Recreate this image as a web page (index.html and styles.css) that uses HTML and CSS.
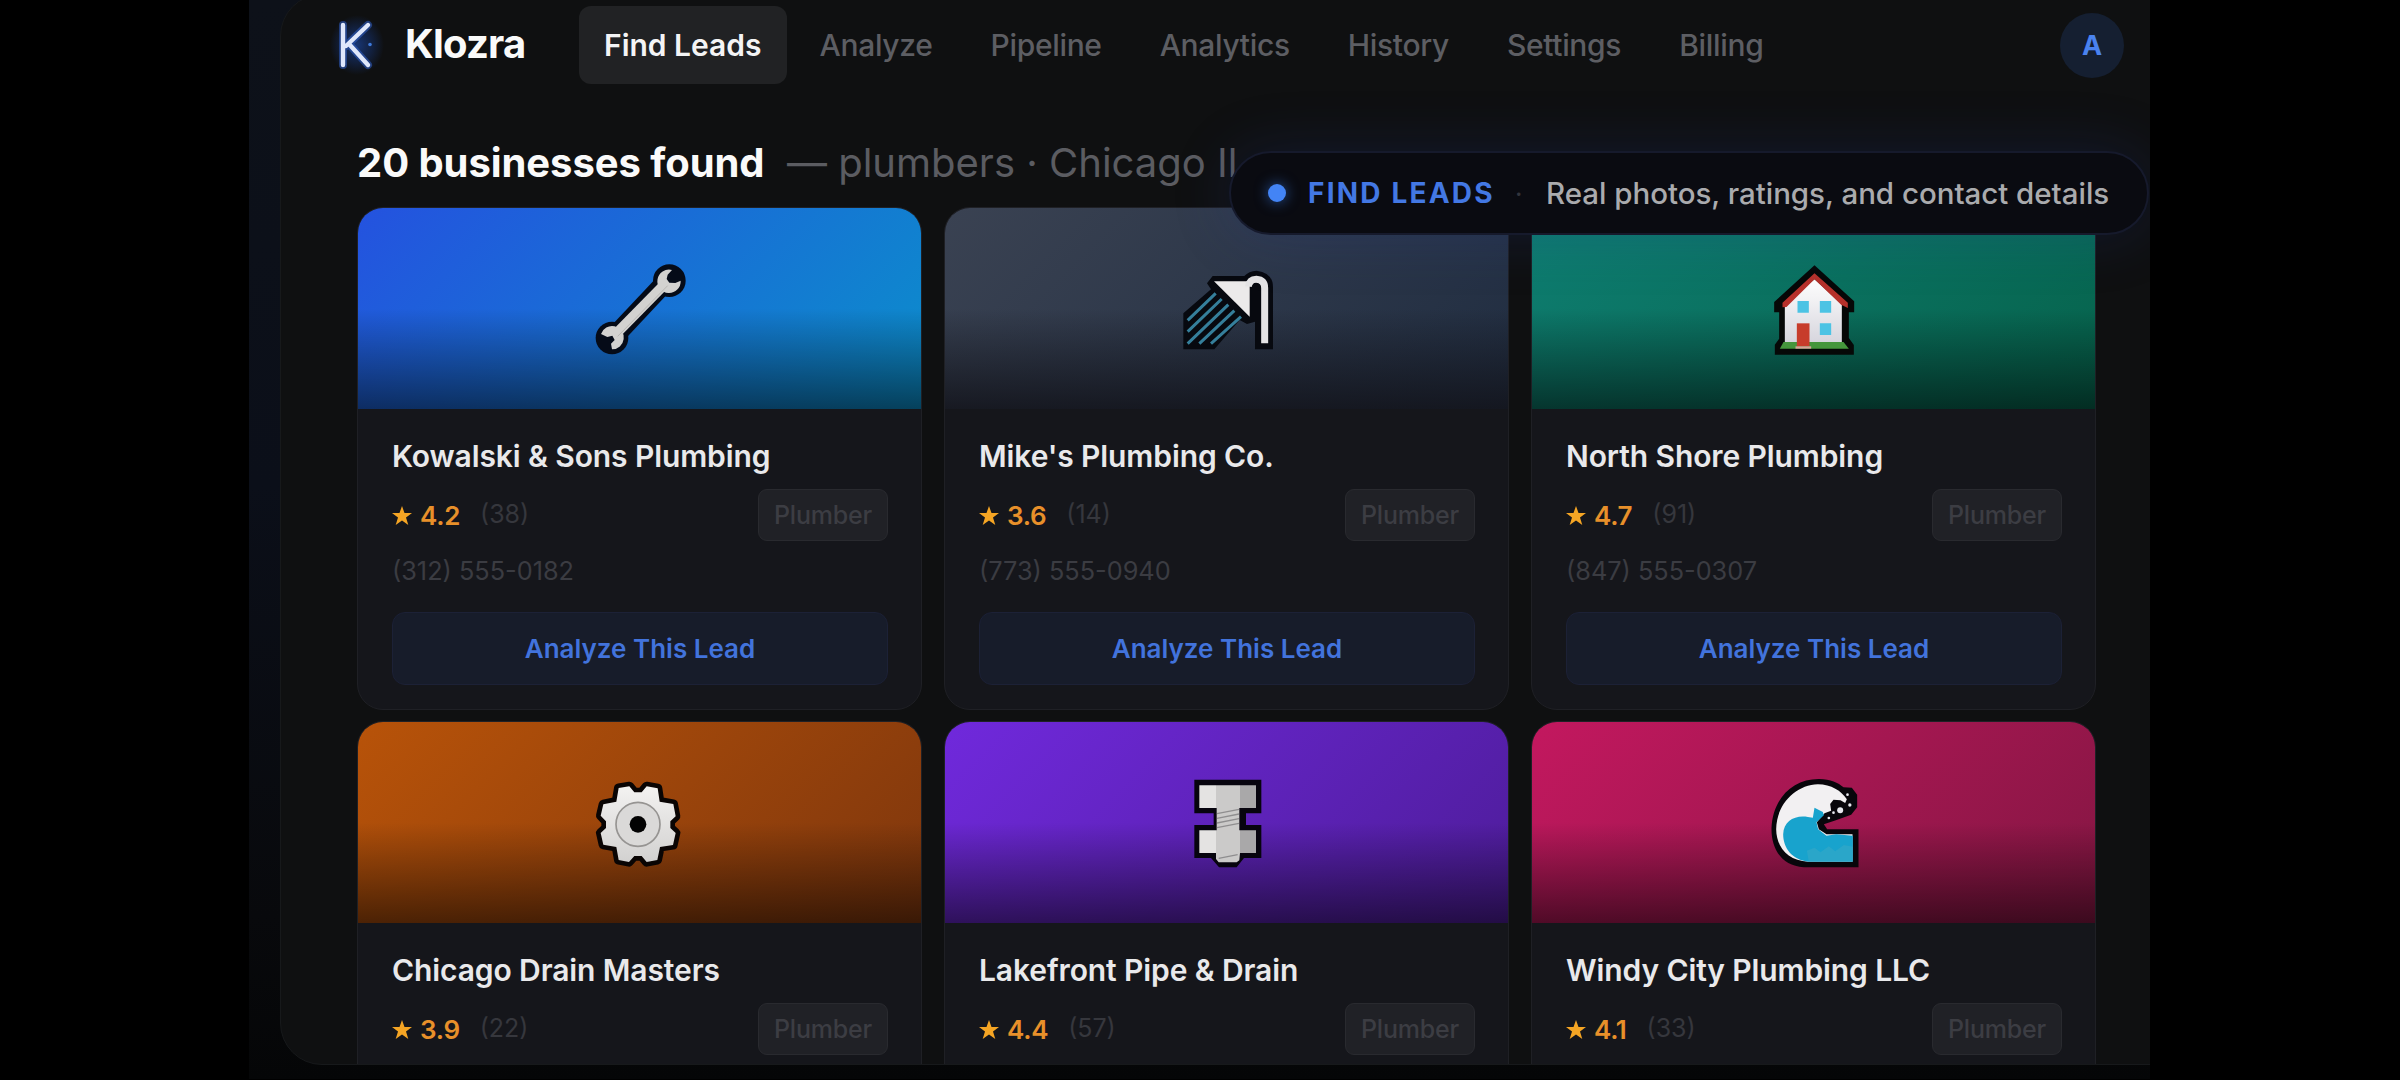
FILE: index.html
```html
<!DOCTYPE html>
<html lang="en">
<head>
<meta charset="utf-8">
<title>Klozra – Find Leads</title>
<link rel="stylesheet" href="styles.css">
</head>
<body>
<div class="stage">
  <div class="app">
    <header class="topbar">
      <svg class="logo" viewBox="0 0 54 60" fill="none">
        <defs><radialGradient id="glow"><stop offset="0" stop-color="#1d4fb8" stop-opacity=".6"/><stop offset=".55" stop-color="#173a86" stop-opacity=".4"/><stop offset="1" stop-color="#173a86" stop-opacity="0"/></radialGradient></defs>
        <ellipse cx="27" cy="30" rx="27" ry="30" fill="url(#glow)"/>
        <path d="M13 10V50M38 10L16 31M19 29L38 50" stroke="#2f5fc4" stroke-opacity=".55" stroke-width="8" stroke-linecap="round"/>
        <path d="M13 10V50M38 10L16 31M19 29L38 50" stroke="#dfe7fb" stroke-width="4.4" stroke-linecap="round"/>
        <circle cx="40" cy="29.500" r="1.800" fill="#3d78d8"/>
      </svg>
      <span class="brand">Klozra</span>
      <nav class="nav">
        <a class="nav-item active">Find Leads</a>
        <a class="nav-item">Analyze</a>
        <a class="nav-item">Pipeline</a>
        <a class="nav-item">Analytics</a>
        <a class="nav-item">History</a>
        <a class="nav-item">Settings</a>
        <a class="nav-item">Billing</a>
      </nav>
      <span class="avatar">A</span>
    </header>
    <main class="content">
      <h1 class="heading">20 businesses found <span class="query">— plumbers · Chicago Il</span></h1>
      <div class="grid">
        <article class="card">
          <div class="cover blue">
            <svg class="icon" viewBox="93 63 288 288">
              <path d="M152 298L325 114" stroke="#050b18" stroke-width="58"/>
              <circle cx="153" cy="294" r="49" fill="#050b18"/><circle cx="325" cy="122" r="49" fill="#050b18"/>
              <path d="M174 272L306 138" stroke="#d3d2d0" stroke-width="30"/>
              <path d="M120 282A35 35 0 1 1 153 328L150 311L161 300L154 287L139 291Z" fill="#d3d2d0"/>
              <path d="M333 90A35 35 0 1 0 359 122L343 129L325 128L317 117L320 104Z" fill="#d3d2d0"/>
              <path d="M170 289L320 137" stroke="#b9b7b4" stroke-width="3"/>
            </svg>
          </div>
          <div class="body">
            <h2 class="name">Kowalski &amp; Sons Plumbing</h2>
            <div class="meta"><svg class="star" viewBox="0 0 20 20"><path d="M10 0L12.500 7H20L14 11.500L16.300 19L10 14.600L3.700 19L6 11.500L0 7H7.500Z"/></svg><b class="score">4.2</b><span class="count">(38)</span><span class="tag">Plumber</span></div>
            <p class="phone">(312) 555-0182</p>
            <a class="button">Analyze This Lead</a>
          </div>
        </article>
        <article class="card">
          <div class="cover slate">
            <svg class="icon" viewBox="84 33 288 288">
              <path d="M168 100L185 78H280Q293 63 317 62Q366 68 366 112V298H312V215L288 222L266 210L190 298H97V190L180 118Z" fill="#07090f"/>
              <g stroke="#357f9b" stroke-width="9"><path d="M110 211L194 130M110 245L212 147M110 281L232 164M145 281L250 182M180 281L270 200"/></g>
              <path d="M189 94H296V200Z" fill="#eceaea"/>
              <path d="M293 110Q295 88 316 88Q341 90 341 114V280" fill="none" stroke="#e4e3e4" stroke-width="21"/>
              <path d="M301 115Q304 98 316 98Q329 100 329 117V198H301Z" fill="#07090f"/>
            </svg>
          </div>
          <div class="body">
            <h2 class="name">Mike's Plumbing Co.</h2>
            <div class="meta"><svg class="star" viewBox="0 0 20 20"><path d="M10 0L12.500 7H20L14 11.500L16.300 19L10 14.600L3.700 19L6 11.500L0 7H7.500Z"/></svg><b class="score">3.6</b><span class="count">(14)</span><span class="tag">Plumber</span></div>
            <p class="phone">(773) 555-0940</p>
            <a class="button">Analyze This Lead</a>
          </div>
        </article>
        <article class="card">
          <div class="cover green">
            <svg class="icon" viewBox="76.5 33 288 288">
              <defs><linearGradient id="wall" x2="0" y2="1"><stop offset="0" stop-color="#fff"/><stop offset="1" stop-color="#d5d4dc"/></linearGradient></defs>
              <path d="M222 46L341 154V187H325V264L340 285V314H103V284L116 266V187H101V156Z" fill="#060807"/>
              <path d="M222 88L304 162V284H133V162Z" fill="url(#wall)"/>
              <path d="M126 172V158L222 70L322 158V174L302 164L222 88L138 171Z" fill="#b7312b"/>
              <path d="M118 296L129 276H309L325 296Z" fill="#45963c"/>
              <path d="M169 220H207V289H169Z" fill="#c73c2b"/><path d="M165 289H212V296H165Z" fill="#d9a39b"/>
              <path d="M171 153H205V188H171ZM238 153H272V188H238ZM238 220H272V255H238Z" fill="#4cc3e4"/>
            </svg>
          </div>
          <div class="body">
            <h2 class="name">North Shore Plumbing</h2>
            <div class="meta"><svg class="star" viewBox="0 0 20 20"><path d="M10 0L12.500 7H20L14 11.500L16.300 19L10 14.600L3.700 19L6 11.500L0 7H7.500Z"/></svg><b class="score">4.7</b><span class="count">(91)</span><span class="tag">Plumber</span></div>
            <p class="phone">(847) 555-0307</p>
            <a class="button">Analyze This Lead</a>
          </div>
        </article>
        <article class="card">
          <div class="cover orange">
            <svg class="icon" viewBox="93 42 288 288">
              <defs><linearGradient id="gear" x2="0" y2="1"><stop offset="0" stop-color="#f3f2f1"/><stop offset="1" stop-color="#d2d1d0"/></linearGradient></defs>
              <path d="M173 81L205 76L220 94H242L257 76L290 82L296 122L337 129L344 166L328 181V201L344 216L336 252L297 258L289 297L257 303L242 285H220L204 303L173 297L166 258L127 251L119 216L135 201V181L119 164L127 130L166 122Z" fill="url(#gear)" stroke="#0a0504" stroke-width="28" stroke-linejoin="round" paint-order="stroke"/>
              <circle cx="231" cy="190" r="66" fill="#dad9d8" stroke="#969492" stroke-width="5"/>
              <circle cx="231" cy="190" r="25" fill="#030303"/>
            </svg>
          </div>
          <div class="body">
            <h2 class="name">Chicago Drain Masters</h2>
            <div class="meta"><svg class="star" viewBox="0 0 20 20"><path d="M10 0L12.500 7H20L14 11.500L16.300 19L10 14.600L3.700 19L6 11.500L0 7H7.500Z"/></svg><b class="score">3.9</b><span class="count">(22)</span><span class="tag">Plumber</span></div>
          </div>
        </article>
        <article class="card">
          <div class="cover purple">
            <svg class="icon" viewBox="84 42 288 288">
              <path d="M130 56H331V157H285V192H331V291H279L257 319H204L180 291H130V192H188V157H130Z" fill="#07040e"/>
              <path d="M145 73H195V141H145ZM145 208H195V276H145Z" fill="#e4e3e2"/>
              <path d="M195 73H267V141H265V208H267V276L265 298L257 304H203L195 294V276V208H197V141H195Z" fill="#cbcac9"/>
              <path d="M267 73H315V141H267ZM267 208H315V276H267Z" fill="#a9a8a9"/>
              <path d="M198 158L264 145M198 172L264 159M198 186L264 173M198 200L264 187M203 292L260 281" stroke="#8f8e8f" stroke-width="4"/>
            </svg>
          </div>
          <div class="body">
            <h2 class="name">Lakefront Pipe &amp; Drain</h2>
            <div class="meta"><svg class="star" viewBox="0 0 20 20"><path d="M10 0L12.500 7H20L14 11.500L16.300 19L10 14.600L3.700 19L6 11.500L0 7H7.500Z"/></svg><b class="score">4.4</b><span class="count">(57)</span><span class="tag">Plumber</span></div>
          </div>
        </article>
        <article class="card">
          <div class="cover pink">
            <svg class="icon" viewBox="76.5 42 288 288">
              <path d="M190 319C122 314 92 262 93 202C96 110 160 53 236 54C270 55 293 65 309 79L334 80L350 101V139L332 161L286 178L250 190L260 205H354V319Z" fill="#08060b"/>
              <path d="M203 302C143 300 108 260 107 205C108 128 167 72 232 70C272 70 303 90 319 115L314 126L300 118L279 116L269 129L272 149L252 157L229 184L235 205L258 220H336V302Z" fill="#f2f0f2"/>
              <path d="M205 302C154 298 128 260 128 220C130 180 162 162 202 168L217 170L222 140L247 153L250 163L228 184L233 205L258 224L287 220L337 224V302Z" fill="#18a3cd"/>
              <path d="M199 269L222 260L240 274L265 256L284 271L310 252L337 257V302H205Z" fill="#45abc4" opacity=".4"/>
              <g fill="#e7e8ee"><circle cx="299" cy="148" r="9"/><circle cx="321" cy="101" r="4"/><circle cx="328" cy="132" r="5"/><circle cx="279" cy="155" r="4"/><circle cx="265" cy="171" r="4"/></g>
            </svg>
          </div>
          <div class="body">
            <h2 class="name">Windy City Plumbing LLC</h2>
            <div class="meta"><svg class="star" viewBox="0 0 20 20"><path d="M10 0L12.500 7H20L14 11.500L16.300 19L10 14.600L3.700 19L6 11.500L0 7H7.500Z"/></svg><b class="score">4.1</b><span class="count">(33)</span><span class="tag">Plumber</span></div>
          </div>
        </article>
      </div>
    </main>
  </div>
  <div class="toast"><i class="dot"></i><span class="toast-title">FIND LEADS</span><span class="sep">·</span><span class="toast-text">Real photos, ratings, and contact details</span></div>
</div>
</body>
</html>
```
FILE: styles.css
```css
* { box-sizing: border-box; }
body {
  margin: 0;
  height: 1080px;
  overflow: hidden;
  background: #000;
  font-family: Inter, "Liberation Sans", sans-serif;
}
.stage {
  position: relative;
  width: 1901px;
  height: 1079px;
  margin-left: 249px;
  overflow: hidden;
  background: linear-gradient(#0d1119 0, #0b0f19 45%, #08090c 85%, #050607 100%);
}
.app {
  width: 1930px;
  height: 1071px;
  margin: -6px 0 0 31px;
  padding: 5px 0 0;
  border: 1px solid #17191b;
  border-radius: 42px;
  overflow: hidden;
  background: #0f1011;
}
.topbar {
  display: flex;
  align-items: center;
  width: 1843px;
  height: 90px;
  padding-left: 49px;
}
.logo { width: 54px; height: 60px; }
.brand {
  width: 174px;
  padding: 0 0 3px 21px;
  font-size: 40px;
  font-weight: 700;
  line-height: 48px;
  letter-spacing: -0.8px;
  color: #fafafa;
}
.nav { display: flex; gap: 8px; margin-left: 21px; }
.nav-item {
  padding: 0 25px;
  border-radius: 12px;
  font-size: 30px;
  font-weight: 500;
  line-height: 78px;
  letter-spacing: -0.33px;
  color: #5d5e63;
}
.nav-item.active {
  background: #212224;
  font-weight: 600;
  letter-spacing: 0;
  color: #f4f4f5;
}
.avatar {
  width: 64px;
  height: 65px;
  margin-left: auto;
  border-radius: 50%;
  background: #151f31;
  font-size: 27px;
  font-weight: 700;
  line-height: 66px;
  text-align: center;
  color: #4a82ee;
}
.content { padding: 43px 54px 0 76px; width: 1871px; }
.heading {
  height: 74px;
  margin: 0;
  font-size: 40px;
  font-weight: 700;
  line-height: 60px;
  letter-spacing: -0.07px;
  white-space: nowrap;
  color: #fafafa;
}
.query { margin-left: 13px; font-weight: 400; letter-spacing: 0; color: #5b5c61; }
.grid {
  display: grid;
  grid-template-columns: repeat(3, 565px);
  gap: 11px 22px;
}
.card {
  height: 503px;
  border: 1px solid #1f2025;
  border-radius: 26px;
  overflow: hidden;
  background: #15161b;
}
.cover {
  display: flex;
  align-items: center;
  justify-content: center;
  height: 201px;
}
.blue { background: linear-gradient(transparent 50%, rgba(0,0,0,.55)), linear-gradient(135deg, #2452df, #0b8fcb); }
.slate { background: linear-gradient(transparent 50%, rgba(18,19,26,.85)), linear-gradient(135deg, #3a4252, #202d41); }
.green { background: linear-gradient(transparent 50%, rgba(0,0,0,.55)), linear-gradient(135deg, #0e7d70, #06634c); }
.orange { background: linear-gradient(transparent 50%, rgba(0,0,0,.55)), linear-gradient(135deg, #b85309, #7e360d); }
.purple { background: linear-gradient(transparent 50%, rgba(0,0,0,.55)), linear-gradient(135deg, #7029dc, #4d1c99); }
.pink { background: linear-gradient(transparent 50%, rgba(0,0,0,.55)), linear-gradient(135deg, #c3185f, #831642); }
.icon { width: 96px; height: 96px; }
.body { padding: 28px 33px 0 34px; }
.name {
  margin: 0;
  font-size: 30px;
  font-weight: 600;
  line-height: 38px;
  letter-spacing: -0.1px;
  color: #e9e9eb;
  white-space: nowrap;
}
.meta { display: flex; align-items: center; height: 52px; margin-top: 14px; }
.star { width: 20px; height: 20px; margin-top: 1px; fill: #f5a524; }
.score {
  margin-left: 8px;
  font-size: 26px;
  font-weight: 600;
  letter-spacing: -0.3px;
  color: #e8902a;
}
.count { margin: -3px 0 0 20px; font-size: 25px; color: #36373d; }
.tag {
  width: 130px;
  height: 52px;
  margin-left: auto;
  border: 1px solid #292a2f;
  border-radius: 9px;
  background: #202126;
  font-size: 25px;
  font-weight: 500;
  line-height: 51px;
  letter-spacing: -0.2px;
  text-align: center;
  color: #3c3d43;
}
.phone {
  margin: 14px 0 0;
  font-size: 25.3px;
  line-height: 32px;
  color: #3b3c42;
}
.button {
  display: block;
  height: 73px;
  margin-top: 25px;
  border: 1px solid #1c2136;
  border-radius: 13px;
  background: #171c2a;
  font-size: 26px;
  font-weight: 600;
  line-height: 71px;
  text-align: center;
  color: #4273dc;
}
/* Floating caption over the results */
.toast {
  position: absolute;
  left: 980px;
  top: 151px;
  display: flex;
  align-items: center;
  width: 920px;
  height: 84px;
  padding-left: 37px;
  border: 2px solid #161a2c;
  border-radius: 42px;
  background: #0a0b11;
  box-shadow: 0 0 60px rgba(37,60,150,.22);
  white-space: nowrap;
}
.dot {
  width: 18px;
  height: 18px;
  border-radius: 50%;
  background: #4384f5;
  box-shadow: 0 0 14px rgba(59,130,246,.6);
}
.toast-title {
  width: 226px;
  padding-left: 22px;
  font-size: 28px;
  font-weight: 700;
  letter-spacing: 2.2px;
  color: #4378e4;
}
.sep { width: 34px; padding-left: 3px; font-size: 26px; color: #33353d; }
.toast-text { font-size: 29.5px; font-weight: 500; letter-spacing: -0.03px; color: #aaabae; }
```
